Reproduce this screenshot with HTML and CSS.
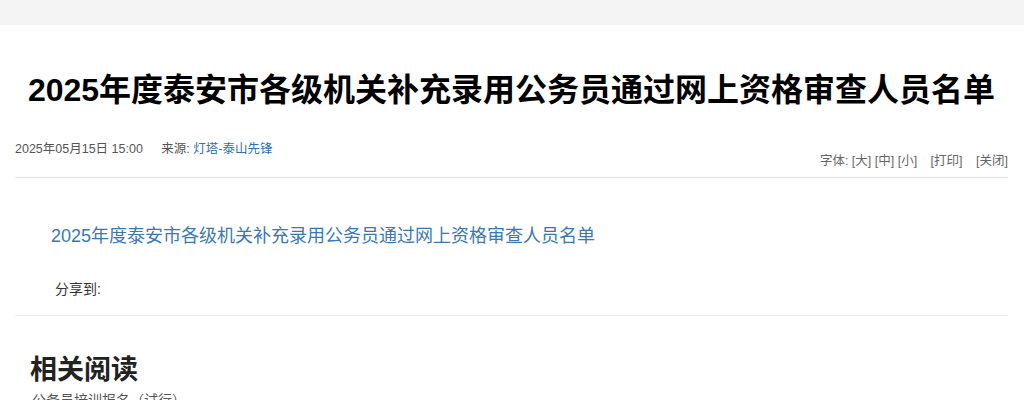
FILE: index.html
```html
<!DOCTYPE html>
<html lang="zh-CN">
<head>
<meta charset="utf-8">
<title>2025年度泰安市各级机关补充录用公务员通过网上资格审查人员名单</title>
<link rel="stylesheet" href="styles.css">
</head>
<body>
<div class="topbar"></div>
<div class="article">
  <h1 class="title">2025年度泰安市各级机关补充录用公务员通过网上资格审查人员名单</h1>
  <div class="meta">
    <div class="meta-left">
      <span class="date">2025年05月15日 15:00</span>
      <span class="source">来源: <a class="source-link" href="#">灯塔-泰山先锋</a></span>
    </div>
    <div class="meta-right">字体: [大] [中] [小] <span class="gap">[打印]</span> <span class="gap">[关闭]</span></div>
  </div>
  <div class="content">
    <a class="doc-link" href="#">2025年度泰安市各级机关补充录用公务员通过网上资格审查人员名单</a>
    <div class="share">分享到:</div>
  </div>
  <div class="related">
    <h2 class="related-title">相关阅读</h2>
    <div class="related-item">公务员培训报名（试行）</div>
  </div>
</div>
</body>
</html>
```
FILE: styles.css
```css
html, body {
  margin: 0;
  padding: 0;
  background: #fff;
}
body {
  font-family: "Liberation Sans", "Noto Sans CJK SC", sans-serif;
  color: #333;
  overflow: hidden;
}
.topbar {
  height: 25px;
  background: #f4f4f4;
}
.article {
  padding: 0 16px 0 15px;
}
.title {
  margin: 0;
  padding-top: 45px;
  font-size: 32px;
  line-height: 40px;
  font-weight: bold;
  color: #000;
  text-align: center;
}
.meta {
  margin-top: 30px;
  display: flex;
  justify-content: space-between;
  align-items: flex-start;
  font-size: 12.5px;
  line-height: 18px;
  color: #555;
  border-bottom: 1px solid #e0e0e0;
  padding-bottom: 7px;
}
.source {
  margin-left: 15px;
}
.source-link {
  color: #2f6fab;
  text-decoration: none;
}
.meta-right {
  margin-top: 12px;
  color: #666;
}
.gap {
  margin-left: 10px;
}
.content {
  padding: 45px 0 16px;
  border-bottom: 1px solid #eee;
}
.doc-link {
  display: block;
  margin-left: 36px;
  font-size: 18px;
  line-height: 26px;
  color: #3a78b5;
  text-decoration: none;
}
.share {
  margin: 30px 0 0 40px;
  font-size: 14px;
  line-height: 20px;
  color: #333;
}
.related {
  padding: 37px 0 0 15px;
}
.related-title {
  margin: 0;
  font-size: 27px;
  line-height: 34px;
  font-weight: bold;
  color: #222;
}
.related-item {
  margin-top: 3px;
  margin-left: 2px;
  font-size: 14px;
  line-height: 20px;
  color: #555;
}
```
